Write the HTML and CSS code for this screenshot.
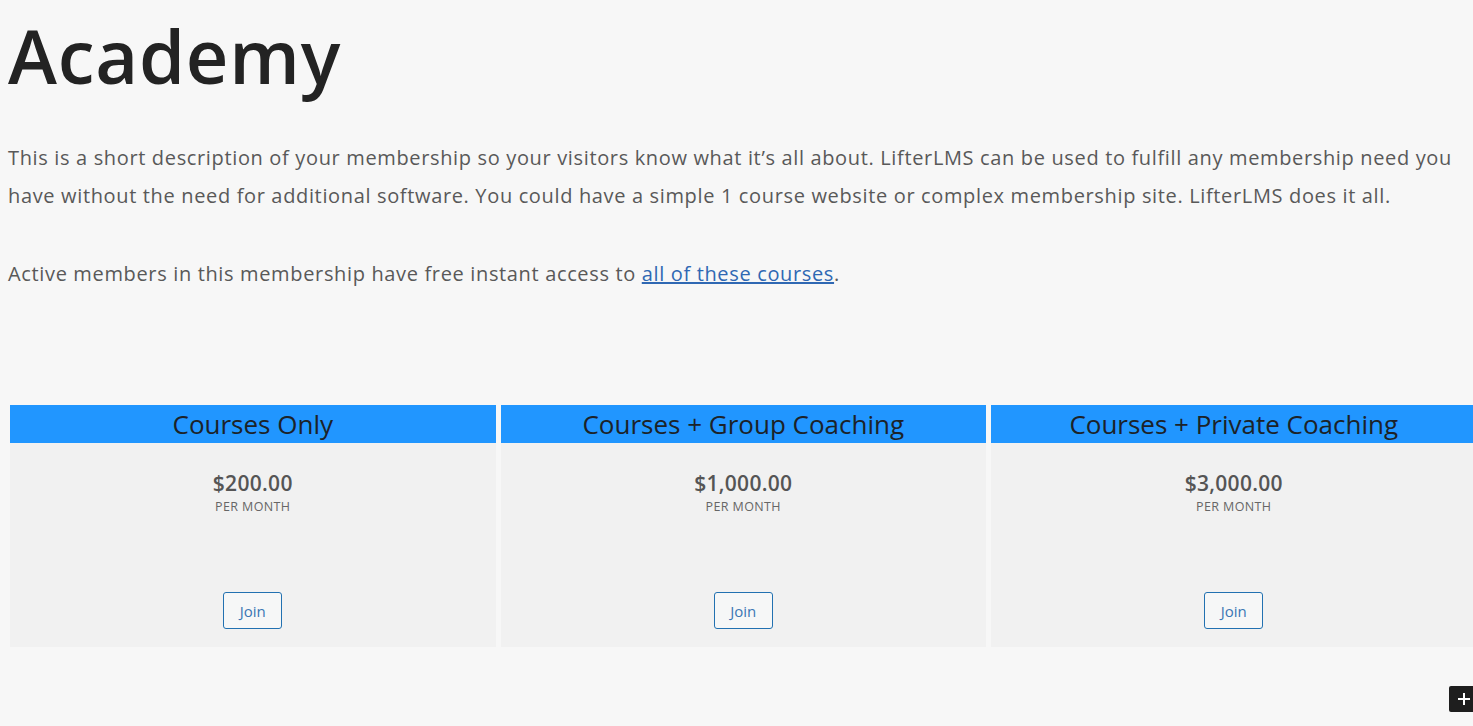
FILE: index.html
```html
<!DOCTYPE html>
<html lang="en">
<head>
    <meta charset="UTF-8">
    <meta name="viewport" content="width=device-width, initial-scale=1.0">
    <title>Academy</title>
    <link rel="stylesheet" href="styles.css">
</head>
<body>
    <h1 class="page-title">Academy</h1>

    <p class="intro">This is a short description of your membership so your visitors know what it’s all about. LifterLMS can be used to fulfill any membership need you have without the need for additional software. You could have a simple 1 course website or complex membership site. LifterLMS does it all.</p>

    <p class="intro">Active members in this membership have free instant access to <a href="#">all of these courses</a>.</p>

    <div class="plans">
        <div class="plan">
            <h3 class="plan-title">Courses Only</h3>
            <div class="plan-body">
                <div class="price">$200.00</div>
                <div class="period">PER MONTH</div>
                <button class="join">Join</button>
            </div>
        </div>
        <div class="plan">
            <h3 class="plan-title">Courses + Group Coaching</h3>
            <div class="plan-body">
                <div class="price">$1,000.00</div>
                <div class="period">PER MONTH</div>
                <button class="join">Join</button>
            </div>
        </div>
        <div class="plan">
            <h3 class="plan-title">Courses + Private Coaching</h3>
            <div class="plan-body">
                <div class="price">$3,000.00</div>
                <div class="period">PER MONTH</div>
                <button class="join">Join</button>
            </div>
        </div>
    </div>

    <button class="add-block" aria-label="Add block">
        <svg width="16" height="16" viewBox="0 0 16 16"><path d="M8 2v12M2 8h12" stroke="#fff" stroke-width="2"/></svg>
    </button>
</body>
</html>
```

FILE: styles.css
```css
html, body {
    overflow-x: hidden;
}

body {
    margin: 0;
    padding: 0 8px;
    background: #f7f7f7;
    font-family: "Open Sans", sans-serif;
    color: #595959;
    min-height: 726px;
    position: relative;
}

.page-title {
    font-size: 74px;
    font-weight: 600;
    color: #232323;
    margin: 0;
    padding-top: 5px;
    line-height: 102px;
    letter-spacing: 0.8px;
}

.intro {
    font-size: 20px;
    line-height: 38px;
    margin: 32px 0 40px;
    letter-spacing: 0.65px;
}

.intro + .intro {
    margin-top: 0;
}

.intro a {
    color: #2f68b3;
    text-decoration: underline;
}

.plans {
    display: flex;
    gap: 5px;
    margin-top: 112px;
    margin-left: 2px;
    width: 1467px;
}

.plan {
    flex: 0 0 485.5px;
    background: #f1f1f1;
    display: flex;
    flex-direction: column;
}

.plan-title {
    margin: 0;
    background: #2196ff;
    color: #1c2228;
    font-weight: 500;
    font-size: 26px;
    line-height: 38px;
    height: 38px;
    text-align: center;
}

.plan-body {
    display: flex;
    flex-direction: column;
    align-items: center;
    height: 204px;
}

.price {
    margin-top: 27px;
    font-size: 21px;
    font-weight: 600;
    color: #555;
    line-height: 26px;
    letter-spacing: 0.3px;
}

.period {
    font-size: 12.5px;
    letter-spacing: 0.4px;
    color: #666;
    margin-top: 2px;
}

.join {
    margin-top: 77px;
    width: 59px;
    height: 37px;
    background: #f6f7f7;
    border: 1px solid #2271b1;
    border-radius: 3px;
    color: #3a76b4;
    font-family: "Open Sans", sans-serif;
    font-size: 15px;
    padding: 0;
    cursor: pointer;
}

.add-block {
    position: absolute;
    right: -6px;
    top: 686px;
    width: 30px;
    height: 26px;
    background: #1e1e1e;
    border: none;
    border-radius: 2px;
    display: flex;
    align-items: center;
    justify-content: flex-start;
    padding-left: 7px;
}
```
